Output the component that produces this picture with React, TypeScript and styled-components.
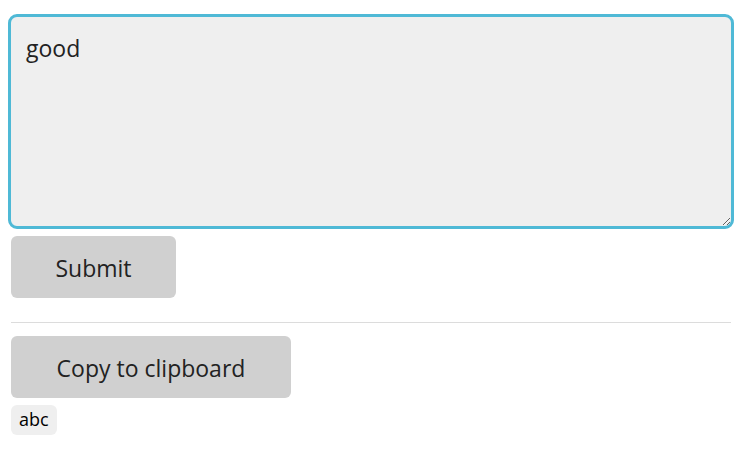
import React from "react";
import styled, { createGlobalStyle } from "styled-components";

const GlobalStyle = createGlobalStyle`
  body {
    margin: 0;
    background: #ffffff;
    font-family: "Open Sans", "Noto Sans", sans-serif;
  }
`;

const Page = styled.div`
  width: 720px;
  padding: 17px 0 0 11px;
  display: flex;
  flex-direction: column;
  align-items: flex-start;
`;

const Editor = styled.textarea`
  box-sizing: border-box;
  width: 720px;
  height: 209px;
  margin: 0;
  padding: 17px 15px;
  border: none;
  border-radius: 6px;
  outline: 3px solid #4fb9d6;
  background: #efefef;
  color: #222222;
  font-family: "Open Sans", "Noto Sans", sans-serif;
  font-size: 23px;
  line-height: 1.3;
  resize: both;
`;

const Button = styled.button<{ $width: number }>`
  box-sizing: border-box;
  width: ${(p) => p.$width}px;
  height: 62px;
  padding: 2px 0 0;
  border: none;
  border-radius: 6px;
  background: #d0d0d0;
  color: #222222;
  font-family: "Open Sans", "Noto Sans", sans-serif;
  font-size: 23px;
  cursor: pointer;
`;

const SubmitButton = styled(Button)`
  margin-top: 10px;
`;

const Divider = styled.hr`
  width: 720px;
  margin: 24px 0 13px;
  border: none;
  border-top: 1px solid #dcdcdc;
`;

const Tag = styled.span`
  margin-top: 7px;
  padding: 3px 8px 5px;
  border-radius: 6px;
  background: #efefef;
  color: #000000;
  font-size: 18px;
  line-height: 22px;
`;

export default function App() {
  return (
    <>
      <GlobalStyle />
      <Page>
        <Editor defaultValue="good" />
        <SubmitButton $width={165}>Submit</SubmitButton>
        <Divider />
        <Button $width={280}>Copy to clipboard</Button>
        <Tag>abc</Tag>
      </Page>
    </>
  );
}
